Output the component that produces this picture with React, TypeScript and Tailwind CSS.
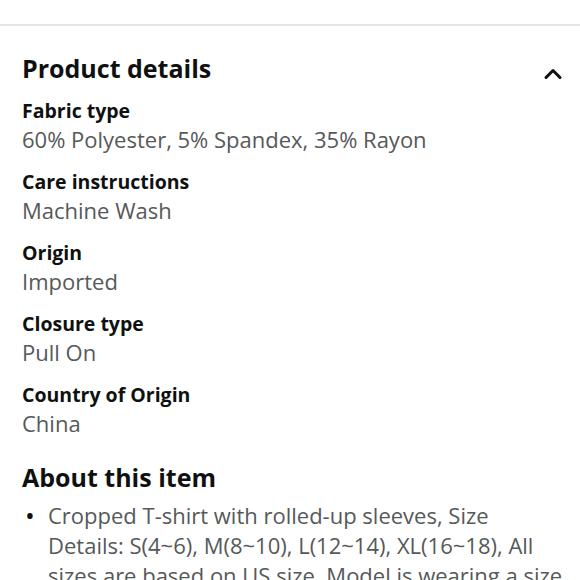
import { ChevronUp } from "lucide-react";

const details = [
  { label: "Fabric type", value: "60% Polyester, 5% Spandex, 35% Rayon" },
  { label: "Care instructions", value: "Machine Wash" },
  { label: "Origin", value: "Imported" },
  { label: "Closure type", value: "Pull On" },
  { label: "Country of Origin", value: "China" },
];

export default function App() {
  return (
    <div
      className="h-[580px] w-[580px] overflow-hidden bg-white text-[#0f1111]"
      style={{ fontFamily: '"Open Sans", "Liberation Sans", sans-serif' }}
    >
      <div className="h-6" />
      <div className="h-[2px] bg-[#e3e6e6]" />

      <div className="pl-[22px] pt-[22px]">
        <div className="flex items-center justify-between pr-[20px]">
          <h2 className="text-[25px] font-bold leading-[30px]">Product details</h2>
          <ChevronUp className="mr-[-7px] mt-[12px] h-7 w-7" strokeWidth={2.6} />
        </div>

        <dl className="mt-[9px] flex flex-col gap-[15px]">
          {details.map((d) => (
            <div key={d.label}>
              <dt className="text-[19.5px] font-bold leading-[28px]">{d.label}</dt>
              <dd className="text-[22px] leading-[28px] text-[#565959]">{d.value}</dd>
            </div>
          ))}
        </dl>

        <h2 className="mt-[25px] text-[25px] font-bold leading-[30px]">About this item</h2>
        <ul className="mt-[8px]">
          <li className="flex text-[22px] leading-[30px] text-[#565959]">
            <span className="w-[26px] shrink-0 pl-[3px] text-[26px] text-[#0f1111]">•</span>
            <span className="w-[520px] shrink-0">
              Cropped T-shirt with rolled-up sleeves, Size Details: S(4~6), M(8~10),
              L(12~14), XL(16~18), All sizes are based on US size. Model is wearing a size
              S.
            </span>
          </li>
        </ul>
      </div>
    </div>
  );
}
